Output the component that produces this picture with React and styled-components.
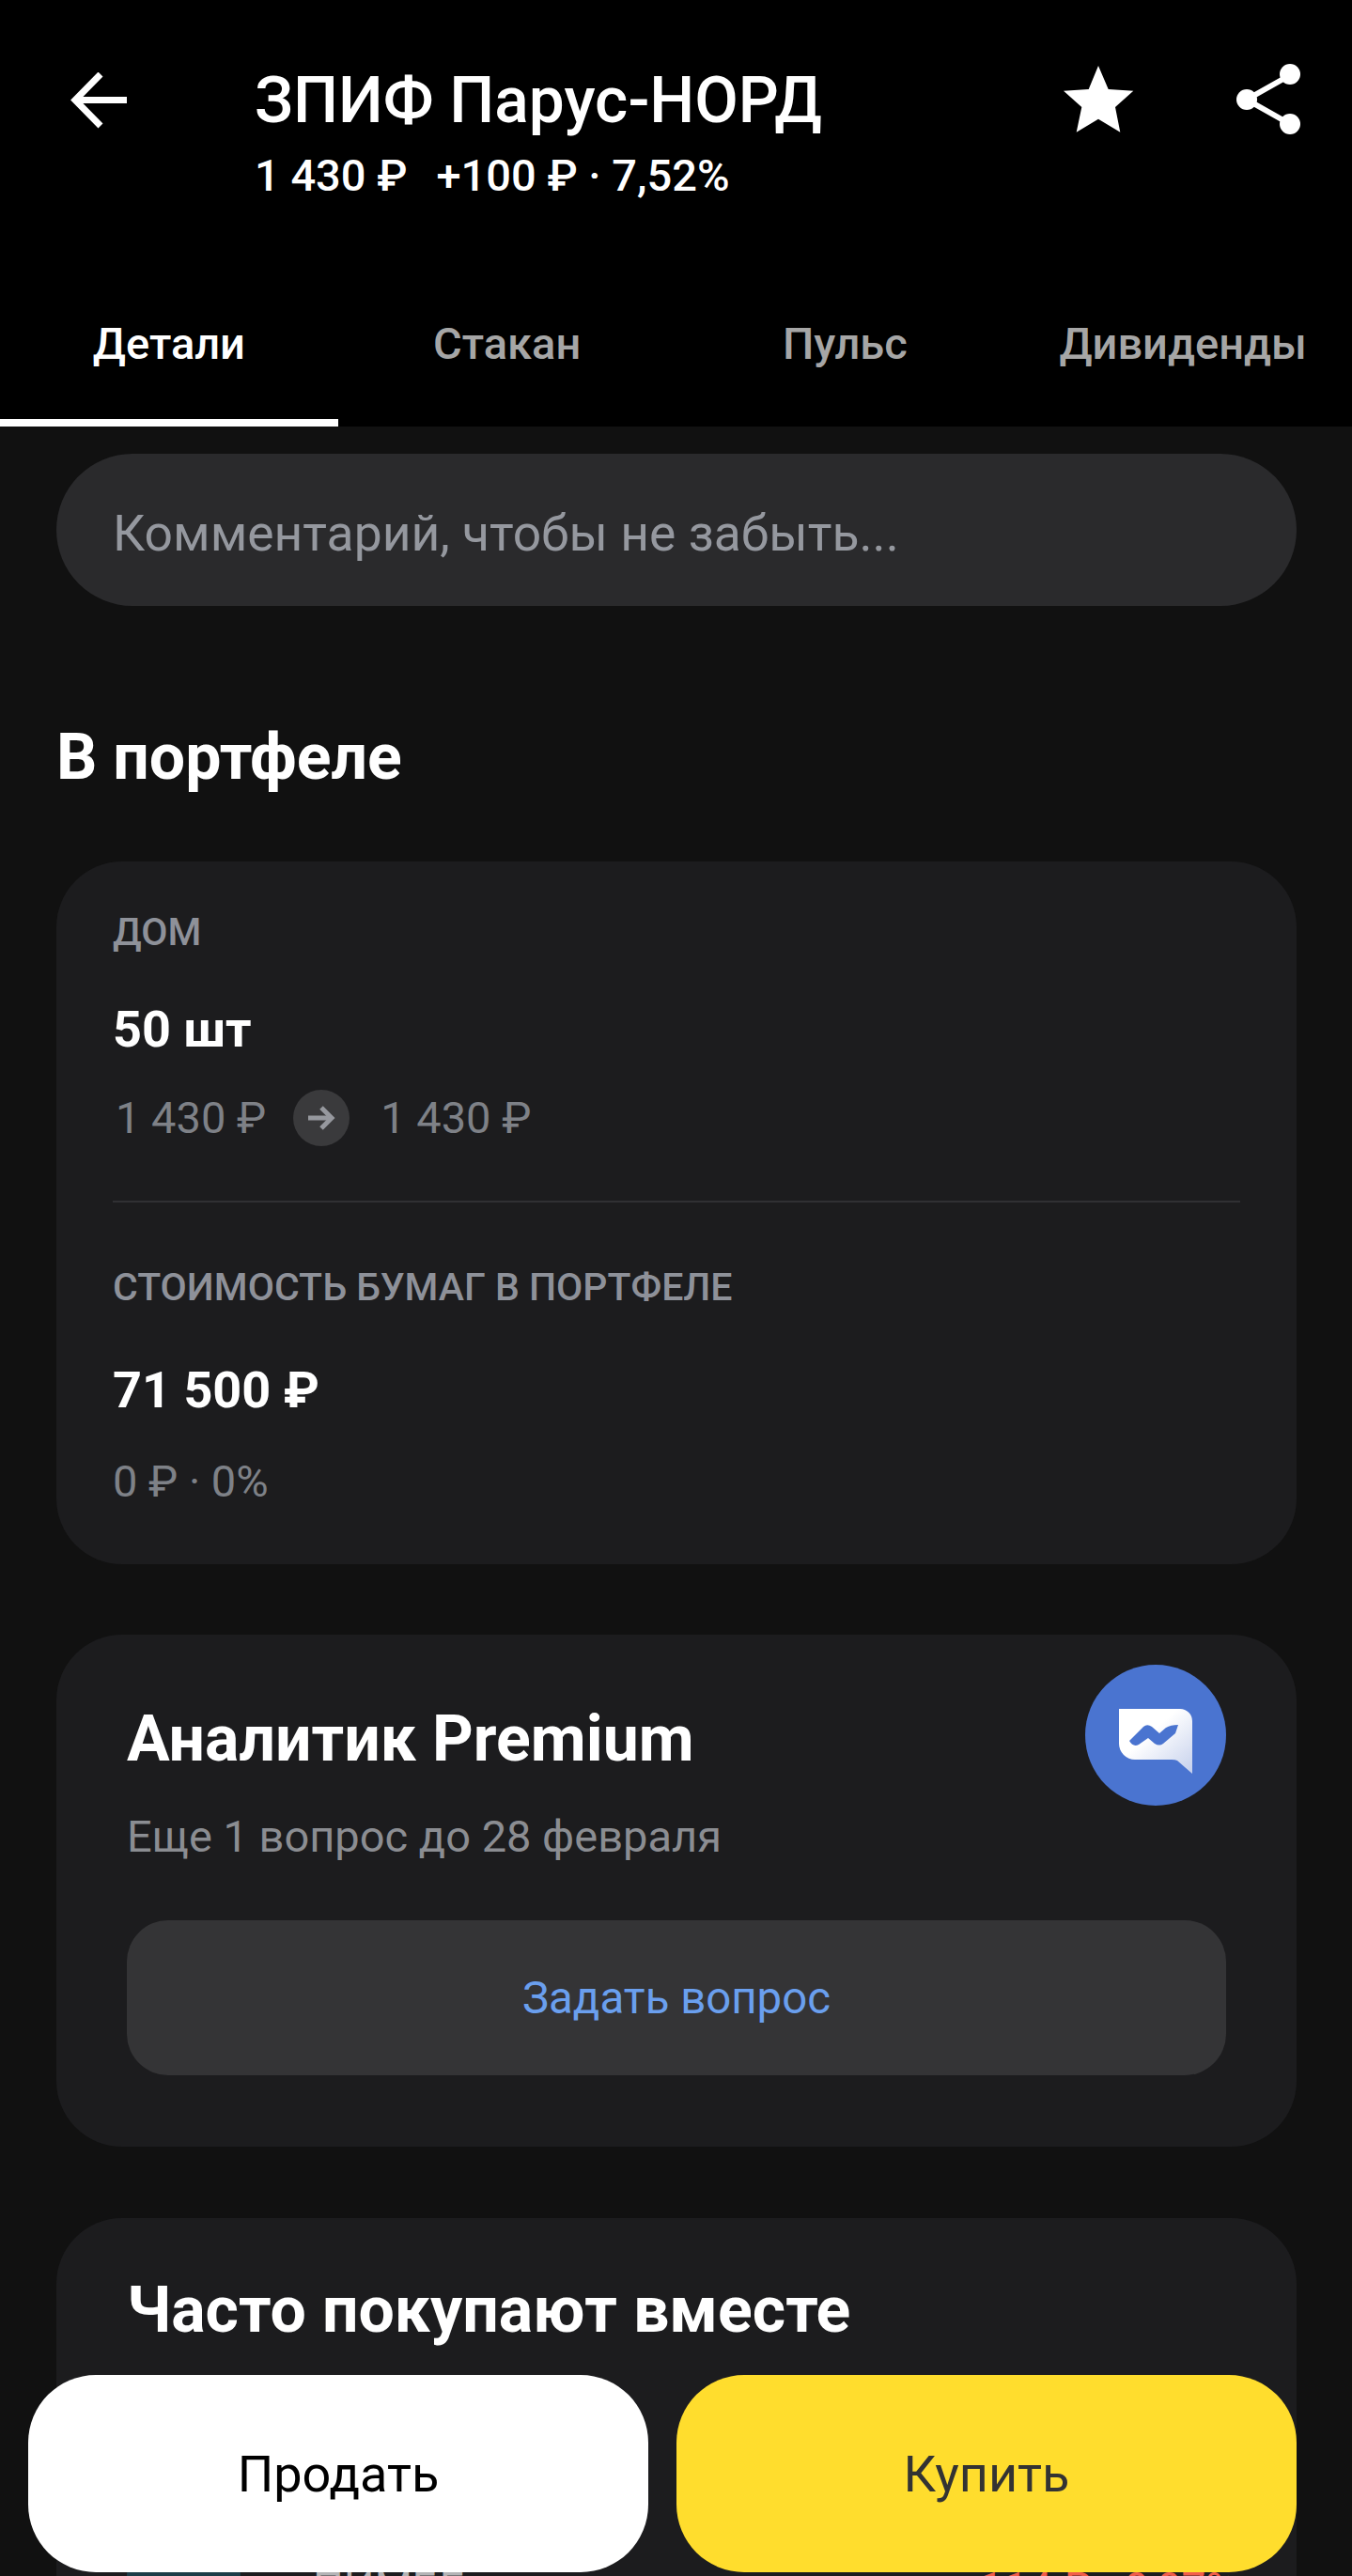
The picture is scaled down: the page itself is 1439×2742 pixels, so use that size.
import React from 'react';
import styled, { createGlobalStyle } from 'styled-components';

const GlobalStyle = createGlobalStyle`
  html, body {
    margin: 0;
    padding: 0;
    background: #111;
  }
  * {
    box-sizing: border-box;
  }
`;

const Screen = styled.div`
  position: relative;
  width: 1439px;
  height: 2742px;
  overflow: hidden;
  background: #111;
  font-family: Roboto, "Noto Sans", sans-serif;
  color: #fff;
`;

const Header = styled.header`
  height: 454px;
  background: #000;
  display: flex;
  flex-direction: column;
`;

const TopBar = styled.div`
  height: 270px;
  padding: 67px 0 0 75px;
  display: flex;
  align-items: flex-start;
`;

const BackButton = styled.div`
  width: 196px;
  padding-top: 10px;
  display: flex;
`;

const TitleBlock = styled.div`
  flex: 1;
`;

const Title = styled.div`
  font-size: 67.6px;
  line-height: 80px;
  font-weight: 500;
`;

const Quote = styled.div`
  font-size: 47px;
  line-height: 54px;
  font-weight: 500;
  margin-top: 13px;
  display: flex;
  gap: 31px;
`;

const Actions = styled.div`
  display: flex;
  align-items: center;
  gap: 109px;
  padding: 1px 55px 0 0;
`;

const Tabs = styled.nav`
  display: flex;
  flex: 1;
`;

const Tab = styled.div`
  width: 360px;
  display: flex;
  align-items: center;
  justify-content: center;
  padding-top: 14px;
  font-size: 47px;
  font-weight: 500;
  color: ${({ active }) => (active ? '#fff' : '#a6a6a6')};
  border-bottom: 8px solid ${({ active }) => (active ? '#fff' : 'transparent')};
`;

const Content = styled.main`
  padding: 29px 59px 0 60px;
`;

const CommentField = styled.div`
  height: 162px;
  border-radius: 81px;
  background: #2a2a2c;
  display: flex;
  align-items: center;
  padding: 6px 0 0 60px;
  font-size: 53.4px;
  color: #95989f;
`;

const SectionTitle = styled.h2`
  margin: 121px 0 0;
  font-size: 68px;
  line-height: 80px;
  font-weight: 700;
`;

const Card = styled.section`
  margin-top: ${({ gap }) => gap}px;
  border-radius: 70px;
  background: #1c1c1e;
  padding: ${({ pad }) => pad};
`;

const Label = styled.div`
  font-size: 41px;
  line-height: 48px;
  font-weight: 500;
  color: #8e9199;
`;

const Amount = styled.div`
  margin-top: ${({ top }) => top}px;
  font-size: 54px;
  line-height: 62px;
  font-weight: 700;
`;

const PriceRow = styled.div`
  margin-top: 33px;
  display: flex;
  align-items: center;
  gap: 29px;
  padding-left: 3px;
  font-size: 47px;
  line-height: 60px;
  color: #7e8187;
`;

const ArrowCircle = styled.div`
  width: 60px;
  height: 60px;
  border-radius: 50%;
  background: #3a3a3c;
  display: flex;
  align-items: center;
  justify-content: center;
  margin-right: 4px;
`;

const Divider = styled.div`
  height: 2px;
  background: #303033;
  margin: 58px 0 66px;
`;

const Delta = styled.div`
  margin-top: 39px;
  font-size: 47px;
  line-height: 54px;
  color: #7e8187;
`;

const CardHead = styled.div`
  display: flex;
  justify-content: space-between;
  align-items: flex-start;
`;

const CardTitle = styled.h3`
  margin: ${({ top }) => top}px 0 0;
  font-size: 68px;
  line-height: 76px;
  font-weight: 700;
`;

const CardText = styled.div`
  margin-top: 39px;
  font-size: 47px;
  line-height: 54px;
  color: #8b8d92;
`;

const AnalystBadge = styled.div`
  width: 150px;
  height: 150px;
  border-radius: 50%;
  background: #4a74d0;
  display: flex;
  align-items: center;
  justify-content: center;
  padding-top: 12px;
`;

const AskButton = styled.div`
  height: 165px;
  margin-top: 62px;
  border-radius: 44px;
  background: #343436;
  display: flex;
  align-items: center;
  justify-content: center;
  font-size: 47.4px;
  color: #6a9fee;
`;

const StockRow = styled.div`
  margin: 184px -12px 0 0;
  display: flex;
  align-items: flex-start;
`;

const StockLogo = styled.div`
  width: 121px;
  height: 121px;
  border-radius: 50%;
  background: #1c3d48;
  margin-right: 77px;
`;

const StockName = styled.div`
  flex: 1;
  padding-top: 47px;
  font-size: 46px;
  line-height: 54px;
  color: #b4b4b6;
`;

const StockChange = styled.div`
  padding-top: 47px;
  font-size: 46px;
  line-height: 54px;
  color: #f25c4a;
`;

const BuyBar = styled.div`
  position: absolute;
  left: 30px;
  right: 59px;
  top: 2528px;
  display: flex;
  gap: 30px;
`;

const TradeButton = styled.div`
  flex: 1;
  height: 210px;
  border-radius: 72px;
  background: ${({ primary }) => (primary ? '#ffdd2d' : '#fff')};
  color: ${({ primary }) => (primary ? '#333' : '#000')};
  display: flex;
  align-items: center;
  justify-content: center;
  font-size: 54px;
`;

const BackIcon = () => (
  <svg width="60" height="60" viewBox="0 0 60 60" fill="none" stroke="#fff" strokeWidth="7">
    <path d="M60 29.5H6" />
    <path d="M32 2 5 29.5 32 57" />
  </svg>
);

const StarIcon = () => (
  <svg width="75" height="71" viewBox="0 0 75 71" fill="#fff">
    <path d="M37 0l10.7 25 26.6 1.7L55 44l5.3 26.7L37 56.7 13.7 70.7 19.3 44 0 26.7 26.7 25z" />
  </svg>
);

const ShareIcon = () => (
  <svg width="68" height="75" viewBox="0 0 68 75" fill="#fff" stroke="none">
    <path d="M57 12 11 38l46 26" fill="none" stroke="#fff" strokeWidth="6" />
    <circle cx="57" cy="11" r="11" />
    <circle cx="11" cy="38" r="11" />
    <circle cx="57" cy="64" r="11" />
  </svg>
);

const ArrowIcon = () => (
  <svg width="30" height="26" viewBox="0 0 30 26" fill="none" stroke="#96989e" strokeWidth="5">
    <path d="M1 13h25" />
    <path d="M15 2l11 11-11 11" />
  </svg>
);

const AnalystIcon = () => (
  <svg width="78" height="69" viewBox="0 0 78 69">
    <defs>
      <linearGradient id="bubble" x1="0" y1="0" x2="1" y2="1">
        <stop offset="0.4" stopColor="#ffffff" />
        <stop offset="1" stopColor="#c5d0ec" />
      </linearGradient>
    </defs>
    <path
      d="M0 0h65a13 13 0 0 1 13 13v56L62 55q-2-1-6-1H17A17 17 0 0 1 0 37z"
      fill="url(#bubble)"
    />
    <path
      d="M11 34 26 19Q30 15.500 35 19L43 26 50 20Q55 17 63 17L60 26 47 37Q43 40 38 37L31 31 21 38Q15 41 11 34z"
      fill="#4a74d0"
    />
  </svg>
);

const App = () => (
  <Screen>
    <GlobalStyle />
    <Header>
      <TopBar>
        <BackButton>
          <BackIcon />
        </BackButton>
        <TitleBlock>
          <Title>ЗПИФ Парус-НОРД</Title>
          <Quote>
            <span>1 430 ₽</span>
            <span>+100 ₽ · 7,52%</span>
          </Quote>
        </TitleBlock>
        <Actions>
          <StarIcon />
          <ShareIcon />
        </Actions>
      </TopBar>
      <Tabs>
        <Tab active>Детали</Tab>
        <Tab>Стакан</Tab>
        <Tab>Пульс</Tab>
        <Tab>Дивиденды</Tab>
      </Tabs>
    </Header>
    <Content>
      <CommentField>Комментарий, чтобы не забыть...</CommentField>
      <SectionTitle>В портфеле</SectionTitle>
      <Card gap={71} pad="51px 60px 61px">
        <Label>ДОМ</Label>
        <Amount top={49}>50 шт</Amount>
        <PriceRow>
          <span>1 430 ₽</span>
          <ArrowCircle>
            <ArrowIcon />
          </ArrowCircle>
          <span>1 430 ₽</span>
        </PriceRow>
        <Divider />
        <Label>СТОИМОСТЬ БУМАГ В ПОРТФЕЛЕ</Label>
        <Amount top={55}>71 500 ₽</Amount>
        <Delta>0 ₽ · 0%</Delta>
      </Card>
      <Card gap={75} pad="32px 75px 76px">
        <CardHead>
          <div>
            <CardTitle top={41}>Аналитик Premium</CardTitle>
            <CardText>Еще 1 вопрос до 28 февраля</CardText>
          </div>
          <AnalystBadge>
            <AnalystIcon />
          </AnalystBadge>
        </CardHead>
        <AskButton>Задать вопрос</AskButton>
      </Card>
      <Card gap={76} pad="60px 75px 200px">
        <CardTitle top={0}>Часто покупают вместе</CardTitle>
        <StockRow>
          <StockLogo />
          <StockName>ПИМБЕ</StockName>
          <StockChange>-114 ₽ · 0,07%</StockChange>
        </StockRow>
      </Card>
    </Content>
    <BuyBar>
      <TradeButton>Продать</TradeButton>
      <TradeButton primary>Купить</TradeButton>
    </BuyBar>
  </Screen>
);

export default App;
